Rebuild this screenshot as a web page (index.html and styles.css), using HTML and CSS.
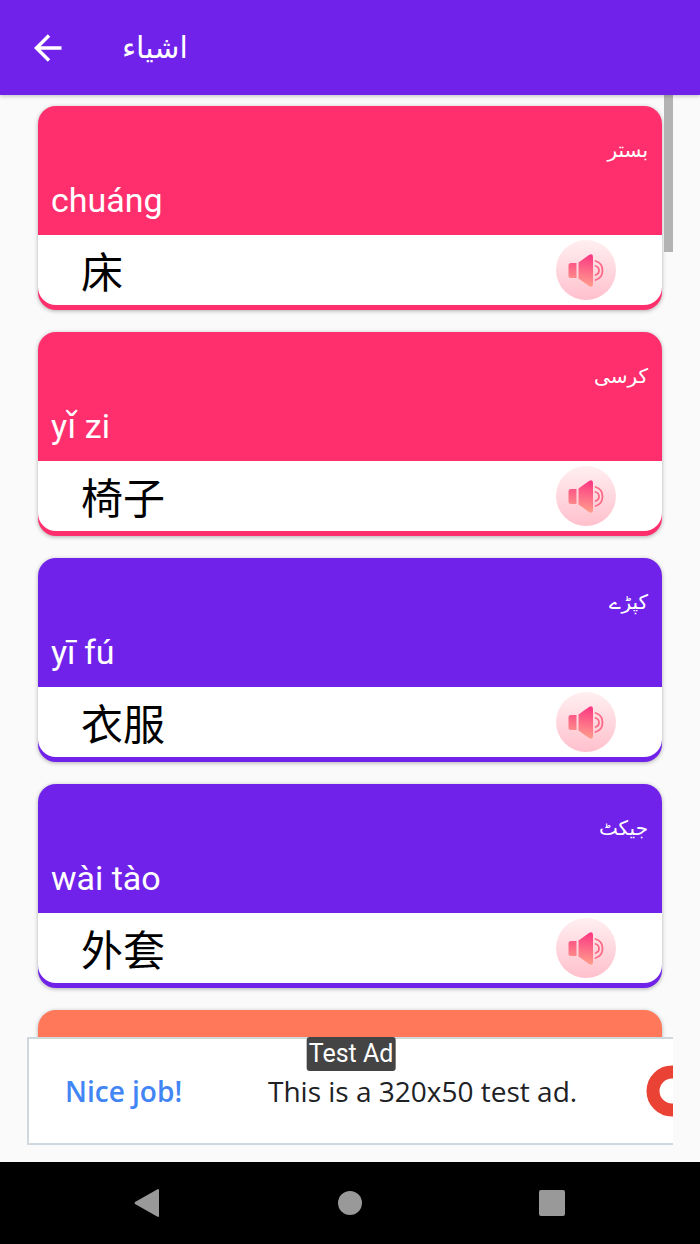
FILE: index.html
```html
<!DOCTYPE html>
<html lang="ur">
<head>
    <meta charset="UTF-8">
    <meta name="viewport" content="width=device-width, initial-scale=1.0">
    <title>اشیاء</title>

    <link rel="stylesheet" href="styles.css">
</head>
<body>
    <!-- shared speaker icon -->
    <svg class="defs" width="0" height="0" aria-hidden="true">
        <defs>
            <linearGradient id="circle-fill" x1="0" y1="0" x2="0" y2="1">
                <stop offset="0" stop-color="#ffeff1"/>
                <stop offset="1" stop-color="#ffc0cc"/>
            </linearGradient>
            <linearGradient id="speaker-fill" gradientUnits="userSpaceOnUse" x1="32" y1="14" x2="28" y2="46">
                <stop offset="0" stop-color="#fb3582"/>
                <stop offset="1" stop-color="#ff9d8c"/>
            </linearGradient>
        </defs>
        <symbol id="speaker" viewBox="0 0 60 60">
            <circle cx="30" cy="30" r="30" fill="url(#circle-fill)"/>
            <path d="M15 23h5.500v15H15a2.500 2.500 0 0 1-2.500-2.500v-10A2.500 2.500 0 0 1 15 23zM22.500 22.500l10.500-7.500q4-2 4 2v27q0 4-4 2L22.500 38.500z" fill="url(#speaker-fill)"/>
            <path d="M39.500 26q3.500 1 3.500 4.500t-3.500 4.500M39.500 21q7 2 7 9.500t-7 9.500" fill="none" stroke="#fc6a87" stroke-width="1.800" stroke-linecap="round"/>
        </symbol>
    </svg>

    <header class="app-bar">
        <button class="back" type="button" aria-label="Back">
            <svg width="28" height="28" viewBox="0 0 28 28">
                <path d="M27.500 14H3M15 1.500L2.500 14 15 26.500" fill="none" stroke="#fff" stroke-width="3.500"/>
            </svg>
        </button>
        <h1 class="title">اشیاء</h1>
    </header>

    <main class="list">
        <article class="card pink">
            <div class="card-top">
                <p class="urdu" dir="rtl">بستر</p>
                <p class="pinyin" lang="zh-Latn">chuáng</p>
            </div>
            <div class="card-bottom">
                <span class="hanzi" lang="zh">床</span>
                <button class="play" type="button" aria-label="Play chuáng"><svg><use href="#speaker"/></svg></button>
            </div>
        </article>
        <article class="card pink">
            <div class="card-top">
                <p class="urdu" dir="rtl">کرسی</p>
                <p class="pinyin" lang="zh-Latn">yǐ zi</p>
            </div>
            <div class="card-bottom">
                <span class="hanzi" lang="zh">椅子</span>
                <button class="play" type="button" aria-label="Play yǐ zi"><svg><use href="#speaker"/></svg></button>
            </div>
        </article>
        <article class="card purple">
            <div class="card-top">
                <p class="urdu" dir="rtl">کپڑے</p>
                <p class="pinyin" lang="zh-Latn">yī fú</p>
            </div>
            <div class="card-bottom">
                <span class="hanzi" lang="zh">衣服</span>
                <button class="play" type="button" aria-label="Play yī fú"><svg><use href="#speaker"/></svg></button>
            </div>
        </article>
        <article class="card purple">
            <div class="card-top">
                <p class="urdu" dir="rtl">جیکٹ</p>
                <p class="pinyin" lang="zh-Latn">wài tào</p>
            </div>
            <div class="card-bottom">
                <span class="hanzi" lang="zh">外套</span>
                <button class="play" type="button" aria-label="Play wài tào"><svg><use href="#speaker"/></svg></button>
            </div>
        </article>
        <article class="card orange">
            <div class="card-top"></div>
        </article>
        <div class="scroll-thumb"></div>
    </main>

    <aside class="ad" lang="en">
        <span class="ad-label">Test Ad</span>
        <strong class="ad-head">Nice job!</strong>
        <span class="ad-text">This is a 320x50 test ad.</span>
        <svg class="ad-logo" width="27" height="52" viewBox="0 0 27 52">
            <circle cx="26" cy="26" r="19" fill="none" stroke="#ea4335" stroke-width="13"/>
        </svg>
    </aside>

    <nav class="nav-bar">
        <button type="button" aria-label="Back">
            <svg width="28" height="28" viewBox="0 0 28 28"><path d="M25 1v26q0 1-1 1L1 15q-1-1 0-2L24 0q1 0 1 1z"/></svg>
        </button>
        <button type="button" aria-label="Home">
            <svg width="28" height="28" viewBox="0 0 28 28"><circle cx="14" cy="14" r="12"/></svg>
        </button>
        <button type="button" aria-label="Recent apps">
            <svg width="28" height="28" viewBox="0 0 28 28"><rect x="1" y="1" width="26" height="26" rx="2"/></svg>
        </button>
    </nav>
</body>
</html>
```

FILE: styles.css
```css
* {
    box-sizing: border-box;
}
body {
    margin: 0;
    height: 100vh;
    display: flex;
    flex-direction: column;
    overflow: hidden;
    background: #fafafa;
    font-family: Roboto, "Noto Sans CJK SC", "DejaVu Sans", sans-serif;
}
h1, p {
    margin: 0;
    font-weight: normal;
}
button {
    padding: 0;
    border: 0;
    background: none;
    cursor: pointer;
}
svg {
    display: block;
}
.defs {
    position: absolute;
}

/* top bar */
.app-bar {
    flex: none;
    display: flex;
    align-items: center;
    gap: 60px;
    height: 95px;
    padding: 0 34px;
    background: #7122ea;
    color: #fff;
    box-shadow: 0 1px 4px rgba(0, 0, 0, 0.25);
    z-index: 1;
}
.title {
    font-family: "DejaVu Sans", sans-serif;
    font-size: 30px;
    line-height: 40px;
}

/* word cards */
.list {
    position: relative;
    flex: 1;
    min-height: 0;
    overflow: hidden;
    padding: 11px 38px 0;
}
.card {
    margin-bottom: 22px;
    padding-bottom: 5px;
    border-radius: 18px;
    overflow: hidden;
    box-shadow: 0 1px 4px rgba(0, 0, 0, 0.3);
}
.pink {
    background: #ff2f6e;
}
.purple {
    background: #7122ea;
}
.orange {
    background: #ff785a;
}
.card-top {
    display: flex;
    flex-direction: column;
    justify-content: space-between;
    height: 129px;
    padding: 24px 14px 15px 13px;
    color: #fff;
}
.urdu {
    font-family: "DejaVu Sans", sans-serif;
    font-size: 20px;
    line-height: 40px;
}
.pinyin {
    font-size: 34px;
    line-height: 40px;
}
.card-bottom {
    display: flex;
    align-items: center;
    justify-content: space-between;
    height: 70px;
    padding: 0 46px 0 43px;
    border-radius: 0 0 18px 18px;
    background: #fff;
}
.hanzi {
    font-family: "Noto Sans CJK SC", sans-serif;
    font-size: 42px;
    line-height: 60px;
    color: #000;
}
.play svg {
    width: 60px;
    height: 60px;
}
.scroll-thumb {
    position: absolute;
    top: 0;
    right: 27px;
    width: 9px;
    height: 157px;
    background: #b3b3b3;
}

/* ad banner */
.ad {
    position: relative;
    flex: none;
    display: flex;
    align-items: center;
    height: 108px;
    margin: 0 27px 17px;
    padding-left: 36px;
    border: 2px solid #cfd8dc;
    border-right: 0;
    background: #fff;
    font-family: "Open Sans", sans-serif;
    font-size: 28px;
    line-height: 40px;
    white-space: nowrap;
}
.ad-label {
    position: absolute;
    top: -2px;
    left: 50%;
    transform: translateX(-50%);
    padding: 0 2px;
    border-radius: 3px;
    background: #444;
    color: #fff;
    font-family: Roboto, sans-serif;
    font-size: 25px;
    line-height: 34px;
}
.ad-head {
    flex: 0 0 203px;
    color: #4285f4;
    font-weight: 600;
}
.ad-text {
    color: #202124;
}
.ad-logo {
    margin-left: auto;
}

/* system buttons */
.nav-bar {
    flex: none;
    display: flex;
    align-items: center;
    justify-content: center;
    gap: 174px;
    height: 82px;
    background: #000;
}
.nav-bar svg {
    fill: #999;
}
```
